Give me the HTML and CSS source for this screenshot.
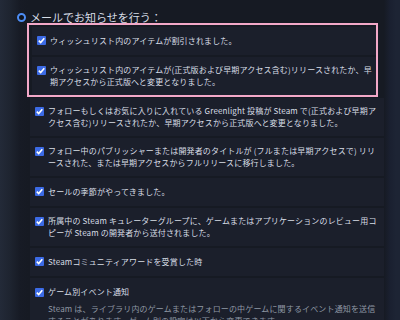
FILE: index.html
```html
<!DOCTYPE html>
<html lang="ja">
<head>
<meta charset="utf-8">
<link rel="stylesheet" href="styles.css">
</head>
<body>
<div class="page">
  <div class="gutter"></div>
  <main class="main">
    <div class="heading"><span class="radio"></span><span>メールでお知らせを行う：</span></div>
    <div class="box">
      <div class="row"><span class="cb"></span><div class="txt">ウィッシュリスト内のアイテムが割引されました。</div></div>
      <div class="row"><span class="cb"></span><div class="txt">ウィッシュリスト内のアイテムが(正式版および早期アクセス含む)リリースされたか、早期アクセスから正式版へと変更となりました。</div></div>
    </div>
    <div class="list">
      <div class="row"><span class="cb"></span><div class="txt">フォローもしくはお気に入りに入れている Greenlight 投稿が Steam で(正式および早期アクセス含む)リリースされたか、早期アクセスから正式版へと変更となりました。</div></div>
      <div class="row"><span class="cb"></span><div class="txt">フォロー中のパブリッシャーまたは開発者のタイトルが (フルまたは早期アクセスで) リリースされた、または早期アクセスからフルリリースに移行しました。</div></div>
      <div class="row"><span class="cb"></span><div class="txt">セールの季節がやってきました。</div></div>
      <div class="row"><span class="cb"></span><div class="txt">所属中の Steam キュレーターグループに、ゲームまたはアプリケーションのレビュー用コピーが Steam の開発者から送付されました。</div></div>
      <div class="row"><span class="cb"></span><div class="txt">Steamコミュニティアワードを受賞した時</div></div>
      <div class="row tall"><span class="cb"></span><div class="txt">ゲーム別イベント通知<p class="desc">Steam は、ライブラリ内のゲームまたはフォローの中ゲームに関するイベント通知を送信することがあります。ゲーム別の設定は以下から変更できます。</p></div></div>
    </div>
  </main>
  <div class="side"></div>
</div>
</body>
</html>
```
FILE: styles.css
```css
html, body {
  margin: 0;
  padding: 0;
  background: #161a23;
  overflow: hidden;
}
.page {
  display: flex;
  width: 400px;
  height: 320px;
  overflow: hidden;
  font-family: "Noto Sans CJK JP", "Noto Sans", sans-serif;
  color: #d8dee6;
}
.gutter {
  width: 28px;
  flex: none;
  background: linear-gradient(90deg, #232a38 0px, #1e2430 10px, #171b25 20px, #161a23 28px);
}
.main {
  width: 356px;
  flex: none;
  padding-top: 10px;
}
.side {
  flex: 1;
  background: linear-gradient(90deg, #161a23 0px, #1a2030 6px, #1d2434 12px);
}
.heading {
  display: flex;
  align-items: center;
  gap: 4px;
  margin-left: -11px;
  font-size: 11px;
  line-height: 14px;
  height: 14px;
  color: #d6dde6;
}
.radio {
  width: 5px;
  height: 5px;
  border: 2px solid #4d8df5;
  border-radius: 50%;
  background: #10141d;
}
.box {
  margin: -1px 0 0 -1px;
  border: 2px solid #f3a8c8;
  padding: 2px 0 0 3px;
  width: 344px;
  display: flex;
  flex-direction: column;
  gap: 2px;
}
.list {
  margin-top: 1px;
  margin-left: 2px;
  display: flex;
  flex-direction: column;
  gap: 2px;
}
.row {
  display: flex;
  align-items: flex-start;
  gap: 4px;
  background: #1b1f2b;
  padding: 7px 7px 7px 5px;
  font-size: 8px;
  letter-spacing: 0.15px;
  line-height: 12px;
}
.box .row {
  padding-right: 4px;
}
.cb {
  flex: none;
  width: 9px;
  height: 9px;
  margin-top: 2px;
  border-radius: 1px;
  background: #3c6be6 url("data:image/svg+xml;utf8,<svg xmlns='http://www.w3.org/2000/svg' width='9' height='9' viewBox='0 0 9 9'><path d='M1.8 4.6 L3.7 6.5 L7.3 2.3' fill='none' stroke='white' stroke-width='1.6'/></svg>") no-repeat center;
}
.txt {
  flex: 1;
  min-height: 14px;
  display: flex;
  flex-direction: column;
  justify-content: center;
  word-break: break-all;
}
.desc {
  margin: 5px 0 0 0;
  color: #8f98a4;
}
.tall .txt {
  justify-content: flex-start;
}
.tall {
  padding-top: 8px;
}
```
